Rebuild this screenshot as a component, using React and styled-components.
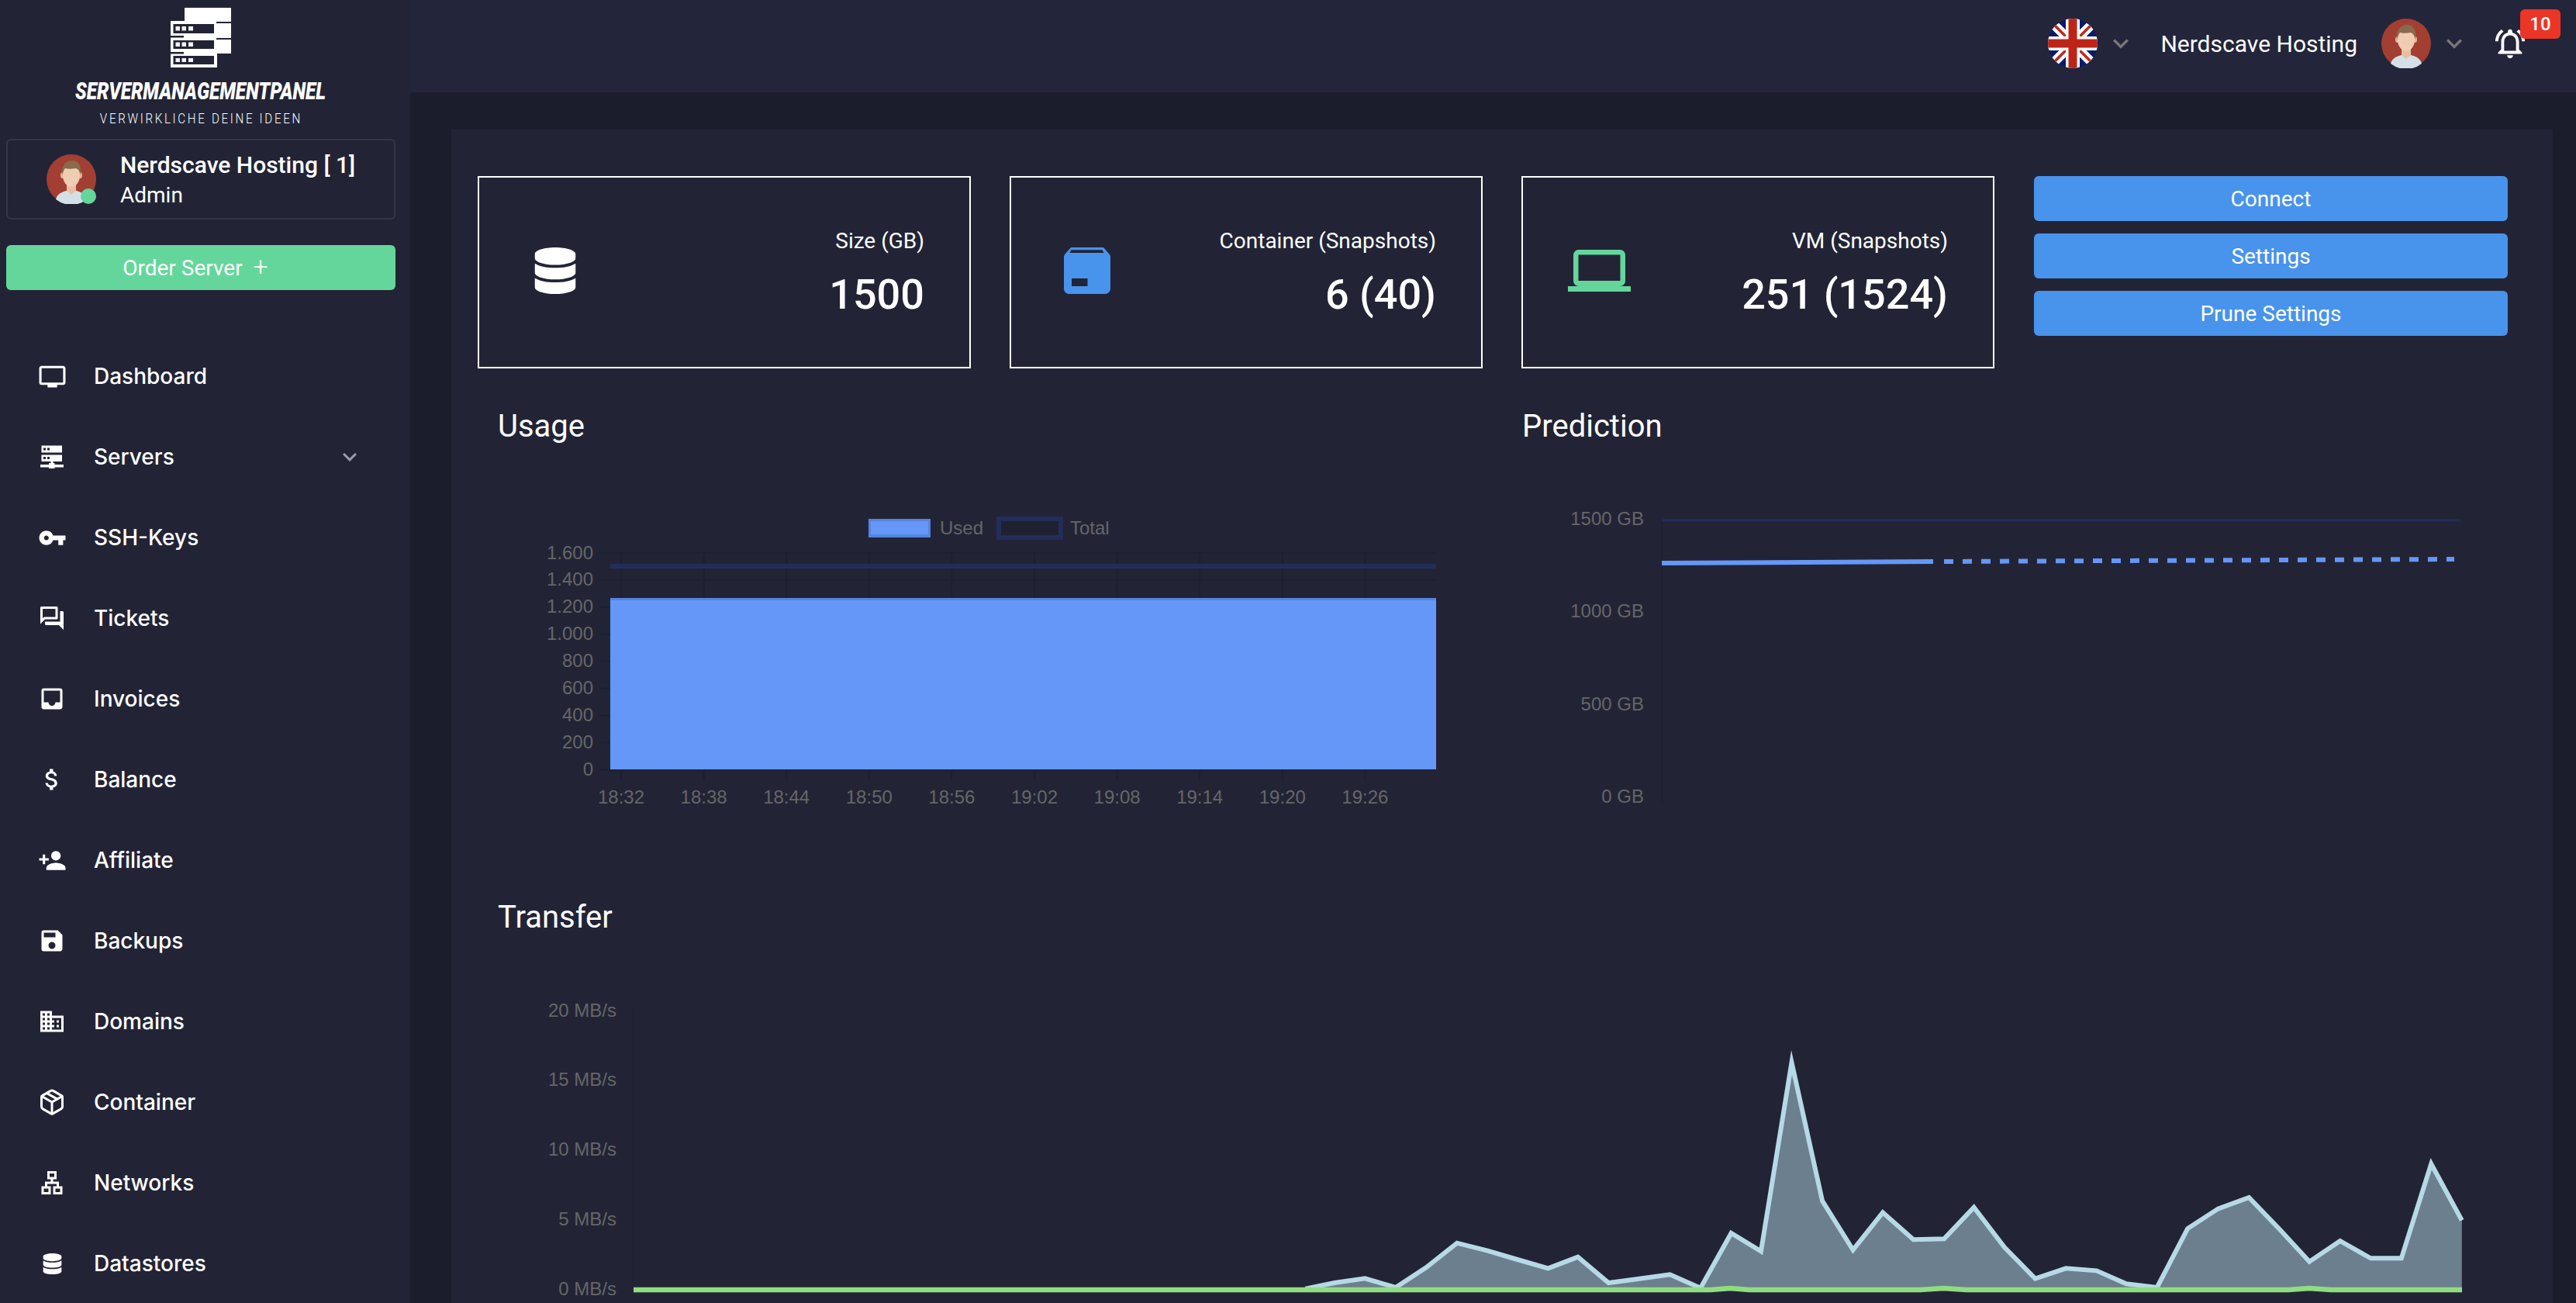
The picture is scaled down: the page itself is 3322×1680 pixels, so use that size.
import styled, { createGlobalStyle } from "styled-components";
import {
  MdOutlineTv,
  MdVpnKey,
  MdOutlineQuestionAnswer,
  MdInbox,
  MdAttachMoney,
  MdPersonAdd,
  MdSave,
  MdDomain,
  MdOutlineLan,
  MdOutlineNotificationsActive,
  MdKeyboardArrowDown,
} from "react-icons/md";
import { FaDatabase } from "react-icons/fa";
import { Package } from "lucide-react";

const GlobalStyle = createGlobalStyle`
  html, body {
    margin: 0;
    height: 100%;
    background: #1c1d2c;
    overflow: hidden;
  }
  * {
    box-sizing: border-box;
  }
  #root {
    height: 100%;
  }
`;

const ServerIcon = () => (
  <svg width="34" height="34" viewBox="0 0 34 34" fill="currentColor">
    <path d="M3.500 2.500H30v9H3.500zM3.500 14.500H30V23H3.500z" />
    <path d="M15.500 23h3v4h-3zM2 27h30v3.500H2zM13 25h7.500v7H13z" />
    <path d="M6 5.500h3v3H6zM11 5.500h3v3h-3zM6 17h3v3H6zM11 17h3v3h-3z" fill="#222436" />
  </svg>
);

const NAV = [
  { label: "Dashboard", icon: <MdOutlineTv size={37} /> },
  { label: "Servers", icon: <ServerIcon />, arrow: true },
  { label: "SSH-Keys", icon: <MdVpnKey size={37} /> },
  { label: "Tickets", icon: <MdOutlineQuestionAnswer size={36} /> },
  { label: "Invoices", icon: <MdInbox size={36} /> },
  { label: "Balance", icon: <MdAttachMoney size={36} /> },
  { label: "Affiliate", icon: <MdPersonAdd size={37} /> },
  { label: "Backups", icon: <MdSave size={36} /> },
  { label: "Domains", icon: <MdDomain size={36} /> },
  { label: "Container", icon: <Package size={36} strokeWidth={2} /> },
  { label: "Networks", icon: <MdOutlineLan size={36} /> },
  { label: "Datastores", icon: <FaDatabase size={27} /> },
];

const Avatar = ({ size = 64 }) => (
  <svg width={size} height={size} viewBox="0 0 64 64">
    <circle cx="32" cy="32" r="32" fill="#a23f32" />
    <path d="M12 58c2-8 10-11 20-12 10 1 18 4 20 12a32 32 0 0 1-40 0z" fill="#d3e0e8" />
    <path d="M26 38h12v9l-6 5-6-5z" fill="#e6bfa3" />
    <ellipse cx="20.500" cy="27" rx="2.500" ry="4" fill="#e3b898" />
    <ellipse cx="43.500" cy="27" rx="2.500" ry="4" fill="#e3b898" />
    <ellipse cx="32" cy="27" rx="11" ry="15" fill="#f0cdb2" />
    <path d="M20 27c-2-12 5-19 13-19s13 7 11 19c-1-5-3-8-6-9-5 1-11 1-14 0-2 2-3 5-4 9z" fill="#8a6a4e" />
  </svg>
);

const Flag = () => (
  <svg width="64" height="64" viewBox="0 0 64 64">
    <defs>
      <clipPath id="flagClip">
        <circle cx="32" cy="32" r="32" />
      </clipPath>
    </defs>
    <g clipPath="url(#flagClip)">
      <rect width="64" height="64" fill="#0a1a6b" />
      <path d="M4 4l56 56M60 4L4 60" stroke="#fff" strokeWidth="12" />
      <path d="M4 4l56 56M60 4L4 60" stroke="#c0271c" strokeWidth="3.500" />
      <path d="M32 0v64M0 32h64" stroke="#fff" strokeWidth="18" />
      <path d="M32 0v64M0 32h64" stroke="#bd2418" strokeWidth="11" />
    </g>
  </svg>
);

const Logo = () => (
  <svg width="78" height="78" viewBox="0 0 78 78">
    <path d="M18 0h60v59H60v18H0V17h18z" fill="#fff" />
    <path
      d="M59 18h19v2H59zM59 39h19v2H59zM0 36h17v2.500H0zM0 57h17v2.500H0zM3.500 21H56v12H3.500zM3.500 42H56v11H3.500zM3.500 62H56v11H3.500z"
      fill="#222436"
    />
    <path
      d="M6.500 24H12v5.500H6.500zM14.500 24H20v5.500h-5.500zM23 24h6v5.500h-6zM6.500 44.500H12V50H6.500zM14.500 44.500H20V50h-5.500zM23 44.500h6V50h-6zM6.500 65H12v5H6.500zM14.500 65H20v5h-5.500zM23 65h6v5h-6z"
      fill="#f2f2f4"
    />
  </svg>
);

const BoxIcon = () => (
  <svg width="60" height="60" viewBox="0 0 60 60">
    <path
      d="M9 0h42l7 8c1.500 1.500 2 3 2 5v40c0 4-3 7-7 7H7c-4 0-7-3-7-7V13c0-2 .5-3.500 2-5z"
      fill="#4893ec"
    />
    <path d="M9.500 3.300h40L51.500 7H7.500z" fill="#222436" />
    <path d="M10 40h20.500v10H10z" fill="#222436" />
  </svg>
);

const LaptopIcon = () => (
  <svg width="81" height="54" viewBox="0 0 81 54">
    <path
      fillRule="evenodd"
      d="M14 0h53c4 0 7 3 7 7v33c0 4-3 7-7 7H14c-4 0-7-3-7-7V7c0-4 3-7 7-7zM13.500 6.500V40h54V6.500z"
      fill="#65d69b"
    />
    <path d="M0 47h81v7H0zM14 40h53v8H14z" fill="#65d69b" />
  </svg>
);

const num = (zx) => 1600 + zx / 0.9106;
const transferPoints = [
  [76, 1145], [110, 1122], [146, 1105], [182, 1140], [218, 1062], [254, 968], [290, 998], [325, 1032],
  [361, 1066], [396, 1022], [432, 1122], [468, 1106], [504, 1090], [540, 1142], [576, 930], [611, 1000],
  [647, 270], [683, 805], [719, 995], [754, 850], [790, 955], [826, 952], [861, 830], [897, 985],
  [933, 1106], [969, 1066], [1005, 1075], [1040, 1126], [1076, 1140], [1112, 912], [1148, 835], [1184, 792],
  [1220, 915], [1255, 1040], [1291, 960], [1327, 1027], [1363, 1027], [1398, 662], [1434, 880],
].map(([x, y]) => `${num(x) - 616},${1280 + y / 3 - 1240}`);

const usageTimes = ["18:32", "18:38", "18:44", "18:50", "18:56", "19:02", "19:08", "19:14", "19:20", "19:26"];
const usageTicks = ["1.600", "1.400", "1.200", "1.000", "800", "600", "400", "200", "0"];

const UsageChart = () => (
  <svg width="1300" height="420" viewBox="0 0 1300 420">
    {usageTicks.map((tick, i) => (
      <g key={tick}>
        <line x1="157" x2="1236" y1={74 + i * 34.9} y2={74 + i * 34.9} stroke="#1e1f2f" strokeWidth="2" />
        <ChartText x="149" y={81.500 + i * 34.9} textAnchor="end">
          {tick}
        </ChartText>
      </g>
    ))}
    {usageTimes.map((time, i) => (
      <g key={time}>
        <line x1={185 + i * 106.6} x2={185 + i * 106.6} y1="74" y2="368" stroke="#1e1f2f" strokeWidth="2" />
        <ChartText x={185 + i * 106.6} y="397" textAnchor="middle">
          {time}
        </ChartText>
      </g>
    ))}
    <rect x="171" y="88" width="1065" height="6" fill="#232d5a" />
    <rect x="171" y="133" width="1065" height="220" fill="#6497f7" />
    <rect x="171" y="132" width="1065" height="3" fill="#5585df" />
    <rect x="504" y="30" width="80" height="24" fill="#5585df" />
    <rect x="507" y="33" width="74" height="17" fill="#6497f7" />
    <ChartText x="596" y="50">
      Used
    </ChartText>
    <rect x="672" y="30" width="80" height="24" fill="#1f2130" stroke="#232d5a" strokeWidth="6" />
    <ChartText x="764" y="50">
      Total
    </ChartText>
  </svg>
);

const PredictionChart = () => (
  <svg width="1272" height="440" viewBox="0 0 1272 440">
    <line x1="181" x2="181" y1="60" y2="427" stroke="#1f2031" strokeWidth="2" />
    {[
      ["1500 GB", 68],
      ["1000 GB", 187],
      ["500 GB", 307],
      ["0 GB", 426],
    ].map(([label, y]) => (
      <ChartText key={label} x="158" y={y} textAnchor="end">
        {label}
      </ChartText>
    ))}
    <line x1="181" x2="1211" y1="62" y2="62" stroke="#232d5a" strokeWidth="3" />
    <line x1="181" x2="531" y1="117" y2="115" stroke="#6497f7" strokeWidth="6" />
    <line x1="545" x2="1203" y1="115" y2="112" stroke="#6497f7" strokeWidth="6" strokeDasharray="12 12" />
  </svg>
);

const TransferChart = () => (
  <svg width="2600" height="440" viewBox="0 0 2600 440">
    <line x1="201" x2="201" y1="52" y2="426" stroke="#1f2031" strokeWidth="2" />
    {[
      ["20 MB/s", 71],
      ["15 MB/s", 160],
      ["10 MB/s", 250],
      ["5 MB/s", 340],
      ["0 MB/s", 430],
    ].map(([label, y]) => (
      <ChartText key={label} x="179" y={y} textAnchor="end">
        {label}
      </ChartText>
    ))}
    <polygon
      points={`${transferPoints.join(" ")} ${num(1434) - 616},423 ${num(76) - 616},423`}
      fill="#6c7f8e"
      stroke="none"
    />
    <polyline points={transferPoints.join(" ")} fill="none" stroke="#b6d9e6" strokeWidth="6" strokeMiterlimit="20" />
    <path
      d="M201 423 H1590 L1615 421 L1640 423 H1860 L1890 421 L1920 423 H2335 L2362 421 L2390 423 H2559"
      fill="none"
      stroke="#90dd7f"
      strokeWidth="6.500"
    />
  </svg>
);

const STATS = [
  { label: "Size (GB)", value: "1500", icon: <FaDatabase size={60} color="#fff" /> },
  { label: "Container (Snapshots)", value: "6 (40)", icon: <BoxIcon /> },
  { label: "VM (Snapshots)", value: "251 (1524)", icon: <LaptopIcon /> },
];

const App = () => (
  <Page>
    <GlobalStyle />
    <Sidebar>
      <Brand>
        <Logo />
        <BrandName>Servermanagementpanel</BrandName>
        <BrandSub>VERWIRKLICHE DEINE IDEEN</BrandSub>
      </Brand>
      <UserBox>
        <AvatarWrap>
          <Avatar />
          <OnlineDot />
        </AvatarWrap>
        <UserText>
          <UserName>Nerdscave Hosting [ 1]</UserName>
          <UserRole>Admin</UserRole>
        </UserText>
      </UserBox>
      <OrderButton>
        Order Server&nbsp;&nbsp;<OrderPlus>+</OrderPlus>
      </OrderButton>
      <Nav>
        {NAV.map((item) => (
          <NavRow key={item.label}>
            <NavIcon>{item.icon}</NavIcon>
            <NavLabel>{item.label}</NavLabel>
            {item.arrow ? (
              <NavArrow>
                <MdKeyboardArrowDown size={36} />
              </NavArrow>
            ) : null}
          </NavRow>
        ))}
      </Nav>
    </Sidebar>
    <Main>
      <Header>
        <Flag />
        <HeaderArrow>
          <MdKeyboardArrowDown size={40} />
        </HeaderArrow>
        <HeaderName>Nerdscave Hosting</HeaderName>
        <Avatar />
        <HeaderArrow>
          <MdKeyboardArrowDown size={40} />
        </HeaderArrow>
        <Bell>
          <MdOutlineNotificationsActive size={46} />
          <Badge>10</Badge>
        </Bell>
      </Header>
      <Content>
        <Panel>
          <StatRow>
            {STATS.map((stat) => (
              <StatCard key={stat.label}>
                <StatIcon>{stat.icon}</StatIcon>
                <StatText>
                  <StatLabel>{stat.label}</StatLabel>
                  <StatValue>{stat.value}</StatValue>
                </StatText>
              </StatCard>
            ))}
            <ActionCol>
              <ActionButton>Connect</ActionButton>
              <ActionButton>Settings</ActionButton>
              <ActionButton>Prune Settings</ActionButton>
            </ActionCol>
          </StatRow>
          <ChartRow>
            <ChartBox>
              <ChartTitle $height={114}>Usage</ChartTitle>
              <UsageChart />
            </ChartBox>
            <ChartBox>
              <ChartTitle $height={84} $indent={1}>
                Prediction
              </ChartTitle>
              <PredictionChart />
            </ChartBox>
          </ChartRow>
          <ChartTitle $height={82}>Transfer</ChartTitle>
          <TransferChart />
        </Panel>
      </Content>
    </Main>
  </Page>
);

export default App;

const Page = styled.div`
  display: flex;
  width: 3322px;
  height: 1680px;
  overflow: hidden;
  font-family: Roboto, "Liberation Sans", sans-serif;
  color: #fff;
`;

const Sidebar = styled.aside`
  flex: 0 0 529px;
  height: 100%;
  overflow: hidden;
  background: #222436;
  padding: 10px 19px 0 8px;
  display: flex;
  flex-direction: column;
  > * {
    flex: none;
  }
`;

const Brand = styled.div`
  height: 169px;
  display: flex;
  flex-direction: column;
  align-items: center;
  svg {
    flex: none;
  }
`;

const BrandName = styled.div`
  margin-top: 14px;
  font-weight: 900;
  font-style: italic;
  font-size: 32px;
  line-height: 30px;
  text-transform: uppercase;
  white-space: nowrap;
  transform: scaleX(0.76);
`;

const BrandSub = styled.div`
  margin-top: 12px;
  font-weight: 300;
  font-size: 18px;
  line-height: 18px;
  letter-spacing: 3.2px;
  white-space: nowrap;
  transform: scaleX(0.84);
`;

const UserBox = styled.div`
  height: 104px;
  width: 502px;
  border: 2px solid #34364a;
  border-radius: 6px;
  display: flex;
  align-items: center;
  padding-left: 50px;
  gap: 31px;
`;

const AvatarWrap = styled.div`
  position: relative;
  width: 64px;
  height: 64px;
`;

const OnlineDot = styled.span`
  position: absolute;
  right: 0;
  bottom: 0;
  width: 20px;
  height: 20px;
  border-radius: 50%;
  background: #65d69b;
`;

const UserText = styled.div`
  display: flex;
  flex-direction: column;
  gap: 4px;
  padding-top: 2px;
`;

const UserName = styled.div`
  font-size: 30px;
  font-weight: 500;
  line-height: 36px;
  white-space: nowrap;
`;

const UserRole = styled.div`
  font-size: 28px;
  line-height: 34px;
`;

const OrderButton = styled.button`
  margin-top: 33px;
  width: 502px;
  height: 58px;
  padding: 0 14px 0 0;
  border: 0;
  border-radius: 6px;
  background: #65d69b;
  color: #fff;
  font-family: inherit;
  font-size: 28px;
`;

const OrderPlus = styled.span`
  font-size: 34px;
  font-weight: 300;
  line-height: 28px;
`;

const Nav = styled.nav`
  margin-top: 59px;
  display: flex;
  flex-direction: column;
`;

const NavRow = styled.div`
  height: 104px;
  flex: none;
  display: flex;
  align-items: center;
  padding-left: 42px;
`;

const NavIcon = styled.span`
  width: 34px;
  height: 34px;
  display: flex;
  align-items: center;
  justify-content: center;
  margin-right: 37px;
  flex: none;
  svg {
    flex: none;
  }
`;

const NavLabel = styled.span`
  font-family: Inter, sans-serif;
  font-size: 28px;
  font-weight: 500;
`;

const NavArrow = styled.span`
  margin-left: auto;
  margin-right: 41px;
  display: flex;
  color: #9a9cab;
`;

const Main = styled.main`
  flex: 1;
  min-width: 0;
  height: 100%;
  display: flex;
  flex-direction: column;
`;

const Header = styled.header`
  flex: 0 0 119px;
  background: #23253a;
  display: flex;
  align-items: center;
  justify-content: flex-end;
  padding: 0 62px 7px 0;
`;

const HeaderArrow = styled.span`
  display: flex;
  color: #777;
  margin: 0 29px 0 10px;
`;

const HeaderName = styled.span`
  font-size: 30px;
  margin: 0 31px 0 2px;
  white-space: nowrap;
`;

const Bell = styled.span`
  position: relative;
  display: flex;
`;

const Badge = styled.span`
  position: absolute;
  left: 36px;
  top: -21px;
  width: 52px;
  height: 38px;
  border-radius: 6px;
  background: #ea3527;
  font-size: 24px;
  font-weight: 500;
  line-height: 38px;
  text-align: center;
`;

const Content = styled.div`
  flex: 1;
  min-height: 0;
  padding: 48px 30px 0 53px;
`;

const Panel = styled.section`
  height: 100%;
  background: #222436;
  padding: 60px 58px 0 34px;
`;

const StatRow = styled.div`
  display: grid;
  grid-template-columns: 636px 610px 610px 612px;
  column-gap: 50px;
  height: 248px;
`;

const StatCard = styled.div`
  border: 2px solid #fff;
  display: flex;
  align-items: center;
  justify-content: space-between;
  padding: 0 58px 0 68px;
`;

const StatIcon = styled.div`
  width: 60px;
  height: 60px;
  margin-top: -4px;
  display: flex;
  align-items: center;
  justify-content: center;
  svg {
    flex: none;
  }
`;

const StatText = styled.div`
  text-align: right;
  margin-top: 5px;
`;

const StatLabel = styled.div`
  font-size: 28px;
  line-height: 34px;
`;

const StatValue = styled.div`
  margin-top: 19px;
  font-size: 54px;
  font-weight: 500;
  line-height: 66px;
  white-space: nowrap;
`;

const ActionCol = styled.div`
  display: flex;
  flex-direction: column;
  gap: 16px;
  margin-left: 1px;
`;

const ActionButton = styled.button`
  height: 58px;
  border: 0;
  border-radius: 6px;
  background: #4893ec;
  color: #fff;
  font-family: inherit;
  font-size: 28px;
`;

const ChartRow = styled.div`
  margin-top: 50px;
  display: grid;
  grid-template-columns: 1346px 1272px;
`;

const ChartBox = styled.div`
  height: 633px;
  display: flex;
  flex-direction: column;
  svg {
    flex: none;
  }
`;

const ChartTitle = styled.h3`
  margin: 0 0 0 ${(props) => props.$indent ?? 26}px;
  font-size: 40px;
  font-weight: 400;
  line-height: 50px;
  flex: none;
  height: ${(props) => props.$height}px;
`;

const ChartText = styled.text`
  font-family: "Liberation Sans", Arial, sans-serif;
  font-size: 24px;
  fill: #666;
`;
